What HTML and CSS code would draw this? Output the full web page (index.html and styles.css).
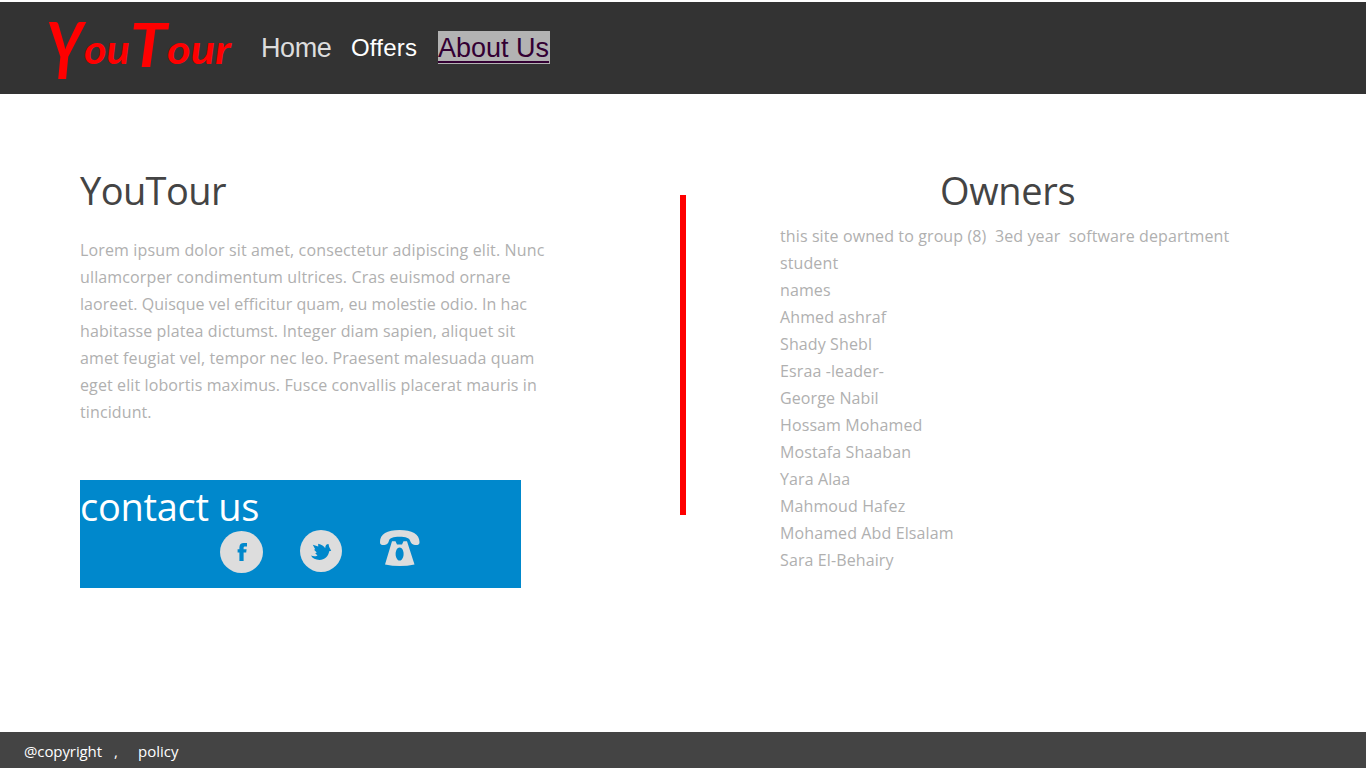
FILE: index.html
```html
<!DOCTYPE html>
<html lang="en">
<head>
<meta charset="utf-8">
<title>YouTour - About Us</title>
<link rel="stylesheet" href="styles.css">
</head>
<body>
<header class="topbar">
  <svg class="logo" width="190" height="76" viewBox="0 0 190 76" role="img" aria-label="YouTour">
    <text class="logo-text"><tspan class="logo-y" x="1" y="65" textLength="37" lengthAdjust="spacingAndGlyphs">Y</tspan><tspan class="logo-low" x="39" y="50" textLength="46" lengthAdjust="spacingAndGlyphs">ou</tspan><tspan class="logo-t" x="85" y="53" textLength="37" lengthAdjust="spacingAndGlyphs">T</tspan><tspan class="logo-low" x="122" y="50" textLength="64" lengthAdjust="spacingAndGlyphs">our</tspan></text>
  </svg>
  <nav class="nav">
    <a class="nav-home">Home</a>
    <a class="nav-offers">Offers</a>
    <a class="nav-about">About Us</a>
  </nav>
</header>
<main class="content">
  <section class="about">
    <h1 class="title brand-title">YouTour</h1>
    <p class="text intro"><span class="loose">Lorem ipsum dolor sit amet, consectetur adipiscing elit. Nunc<br>ullamcorper condimentum ultrices. Cras euismod ornare</span><br><span class="tight">laoreet. Quisque vel efficitur quam, eu molestie odio. In hac</span><br>habitasse platea dictumst. Integer diam sapien, aliquet sit<br>amet feugiat vel, tempor nec leo. Praesent malesuada quam<br>eget elit lobortis maximus. Fusce convallis placerat mauris in<br>tincidunt.</p>
    <div class="contact">
      <h2 class="contact-title">contact us</h2>
      <div class="icons">
        <svg width="43" height="43" viewBox="0 0 43 43"><ellipse cx="21.5" cy="22" rx="21.5" ry="21" fill="#ddd"/><path fill="#08c" d="M19.400 31v-8.500h-1.800v-3.300h1.800v-1.700c0-3.200 1.700-4.500 4.300-4.500h3.300v3.400h-1.700c-1.200 0-1.700.4-1.700 1.400v1.400h3l-.4 3.300h-2.600V31z"/></svg>
        <svg width="42" height="42" viewBox="0 0 42 42"><circle cx="21" cy="21" r="21" fill="#ddd"/><path fill="#08c" d="M12.800 14.800L18.200 16.500 18.200 13.800C21.500 14.800 24 16.200 25.200 18.200 25.200 15.600 26.500 14 28.500 14L29.200 17 31.200 20.800 29.200 21.300C28.500 26.500 24.500 29.900 19.500 29.900 15.500 29.900 12.500 28.500 11 25.600 13.300 26.600 15.500 26.600 17.500 25.500L15.200 23.300 16.800 22.600 14 19.800 15.200 19.200Z"/></svg>
        <svg width="40" height="37" viewBox="0 0 40 37"><path fill="#ddd" d="M0 12C0 4 7 0 19.500 0S39.500 4 39.500 12c0 2-.5 2.500-2 3-4 .3-6-.5-7.500-4.500C29 8 26 6.800 19.500 6.800S10 8 9 10.500C8 14.500 6 15.300 2 15 .5 14.500 0 14 0 12z"/><path fill="#ddd" fill-rule="evenodd" d="M12 11.200h3.500l1.500 3.200h5l1.500-3.200H27L34.500 34.500Q20 37.500 5 34.500zM19.600 17.500a4 6.500 0 1 0 .01 0z"/></svg>
      </div>
    </div>
  </section>
  <div class="divider"></div>
  <section class="owners">
    <h1 class="title owners-title">Owners</h1>
    <p class="text">this site owned to group (8)&nbsp; 3ed year&nbsp; software department<br>student<br>names<br>Ahmed ashraf<br>Shady Shebl<br>Esraa -leader-<br>George Nabil<br>Hossam Mohamed<br>Mostafa Shaaban<br>Yara Alaa<br>Mahmoud Hafez<br>Mohamed Abd Elsalam<br>Sara El-Behairy</p>
  </section>
</main>
<footer class="footer"><span class="copyright">@copyright</span><span class="comma">,</span><span>policy</span></footer>
</body>
</html>
```
FILE: styles.css
```css
* { box-sizing: border-box; }
body { margin: 0; height: 768px; padding-top: 2px; display: flex; flex-direction: column; overflow: hidden; background: #fff; font-family: "Open Sans", sans-serif; }
.topbar { height: 92px; background: #333; display: flex; align-items: flex-start; padding: 12px 0 0 45px; }
.logo { display: block; flex: none; overflow: visible; }
.logo-text { fill: red; font-family: Lato, sans-serif; font-style: italic; font-weight: bold; }
.logo-y { font-size: 78px; }
.logo-t { font-size: 62px; }
.logo-low { font-size: 41px; }
.nav { display: flex; align-items: flex-start; padding: 17px 0 0 26px; font-family: "Liberation Sans", Arial, sans-serif; line-height: 35px; white-space: nowrap; }
.nav-home { width: 90px; font-size: 27px; color: #ddd; letter-spacing: -0.4px; }
.nav-offers { width: 87px; font-size: 24px; line-height: 33px; color: #fff; letter-spacing: 0.2px; }
.nav-about { width: 112px; height: 33px; font-size: 27px; color: #303; background: #b3b3b3; text-decoration: underline; text-decoration-thickness: 2px; text-underline-offset: 4px; text-decoration-skip-ink: none; }
.content { flex: 1; display: flex; align-items: flex-start; padding: 69px 0 0 80px; }
.about { width: 600px; }
.title { margin: 0; font-size: 38px; line-height: 54px; font-weight: 400; color: #444; }
.brand-title { letter-spacing: -0.6px; }
.text { margin: 0; font-size: 16px; line-height: 27px; font-weight: 400; color: #b0b0b0; white-space: nowrap; letter-spacing: 0.11px; }
.loose { letter-spacing: 0.14px; }
.tight { letter-spacing: 0.06px; }
.intro { padding-top: 20px; }
.contact { margin-top: 54px; width: 441px; height: 108px; background: #08c; }
.contact-title { margin: 0; height: 50px; font-size: 38px; line-height: 52px; font-weight: 400; color: #fff; letter-spacing: -0.3px; }
.icons { display: flex; align-items: flex-start; padding-left: 140px; }
.icons svg { margin-right: 37px; }
.icons svg:nth-child(2) { margin-right: 38px; }
.divider { width: 6px; height: 320px; margin-top: 32px; background: red; }
.owners { margin-left: 94px; }
.owners-title { padding-left: 160px; letter-spacing: -0.35px; }
.owners .text { padding-top: 6px; }
.footer { height: 36px; background: #444; color: #fff; display: flex; padding: 8px 0 0 24px; font-size: 15px; line-height: 22px; }
.copyright { width: 90px; letter-spacing: -0.1px; }
.comma { width: 24px; }
```
